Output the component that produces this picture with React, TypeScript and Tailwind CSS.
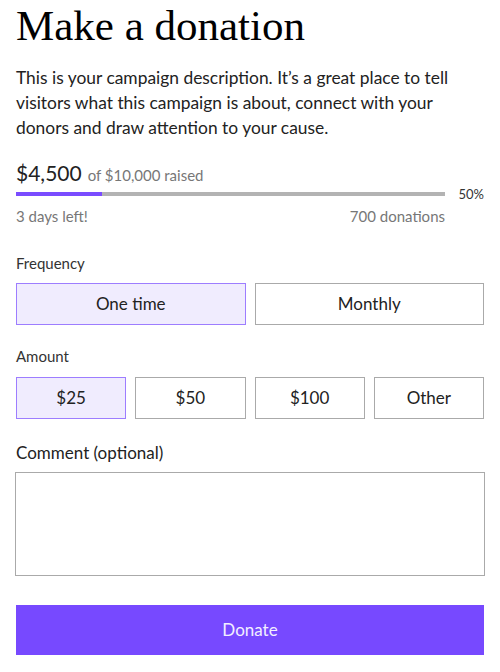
import { useState } from "react"

const sans = { fontFamily: "Lato, 'Open Sans', sans-serif" }

export default function App() {
  const [frequency, setFrequency] = useState("One time")
  const [amount, setAmount] = useState("$25")

  return (
    <div className="w-[500px] h-[672px] bg-white px-4 overflow-hidden text-[#222]" style={sans}>
      <h1
        className="text-[43px] leading-[52px] text-black"
        style={{ fontFamily: "'Liberation Serif', serif" }}
      >
        Make a donation
      </h1>
      <p className="mt-[13px] text-[17.4px] leading-[25px] text-[#222]">
        This is your campaign description. It’s a great place to tell visitors what this campaign is about,
        connect with your donors and draw attention to your cause.
      </p>

      {/* Progress */}
      <div className="mt-[21px] flex items-baseline gap-[6px] leading-[24px]">
        <span className="text-[21px] text-[#222]">$4,500</span>
        <span className="text-[15px] text-[#777]">of $10,000 raised</span>
      </div>
      <div className="mt-[5px] flex h-[4px] items-center">
        <div className="h-[4px] w-[429px] bg-[#b3b3b3]">
          <div className="h-full w-[20%] bg-[#7a4cff]" />
        </div>
        <span className="ml-auto text-[13px] leading-[4px] text-[#333]">50%</span>
      </div>
      <div className="mt-[9px] flex w-[429px] justify-between text-[15px] text-[#777]">
        <span>3 days left!</span>
        <span>700 donations</span>
      </div>

      {/* Frequency */}
      <div className="mt-[24px] text-[15px] text-[#333]">Frequency</div>
      <div className="mt-[9px] grid grid-cols-2 gap-[9px]">
        {["One time", "Monthly"].map((f) => (
          <button
            key={f}
            onClick={() => setFrequency(f)}
            className={
              frequency === f
                ? "h-[42px] border border-[#9d7dff] bg-[#f0ecfe] text-[17px] text-[#222]"
                : "h-[42px] border border-[#aaaaaa] bg-white text-[17px] text-[#222]"
            }
          >
            {f}
          </button>
        ))}
      </div>

      {/* Amount */}
      <div className="mt-[20px] text-[15px] text-[#333]">Amount</div>
      <div className="mt-[9px] grid grid-cols-4 gap-[9px]">
        {["$25", "$50", "$100", "Other"].map((a) => (
          <button
            key={a}
            onClick={() => setAmount(a)}
            className={
              amount === a
                ? "h-[42px] border border-[#9d7dff] bg-[#f0ecfe] text-[17px] text-[#222]"
                : "h-[42px] border border-[#aaaaaa] bg-white text-[17px] text-[#222]"
            }
          >
            {a}
          </button>
        ))}
      </div>

      {/* Comment */}
      <div className="mt-[21px] text-[17px] text-[#222]">Comment (optional)</div>
      <textarea className="mt-[7px] -mx-px block h-[104px] w-[470px] resize-none border border-[#aaaaaa] outline-none" />

      <button className="mt-[29px] h-[50px] w-full bg-[#7749ff] text-[17px] text-[#f3efff]">Donate</button>
    </div>
  )
}
